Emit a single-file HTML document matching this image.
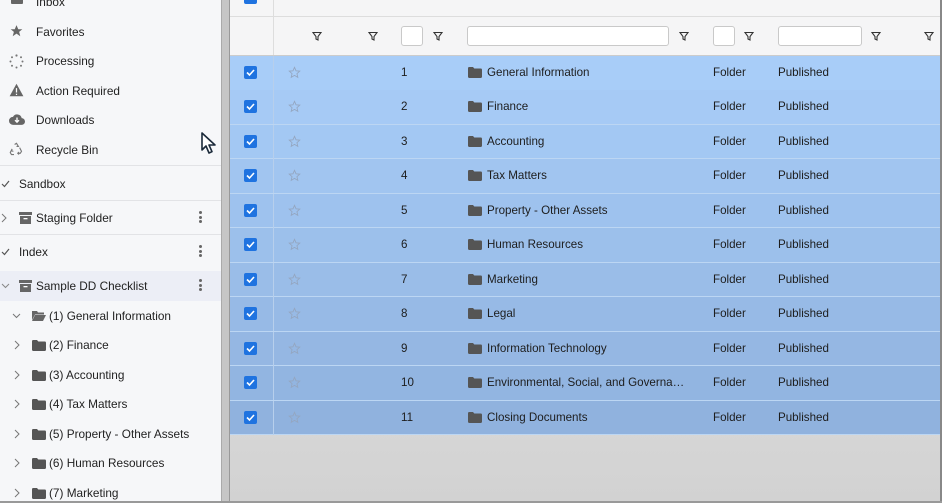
<!DOCTYPE html>
<html><head><style>
*{margin:0;padding:0;box-sizing:border-box}
body{width:942px;height:503px;overflow:hidden;font-family:"Liberation Sans",Arial,sans-serif;font-size:12px;color:#222;background:#fff;position:relative}
.a{position:absolute}
#side{left:0;top:0;width:221px;height:503px;background:#f6f7f9}
#sb{left:221px;top:0;width:9px;height:503px;background:#c6c6c6;border-left:1px solid #aaa;border-right:1px solid #999}
.si{position:absolute;left:36px;font-size:11.8px;color:#222;line-height:14px}
.ic{position:absolute}
.hr{position:absolute;left:0;width:221px;height:1px;background:#e2e3e6}
.dots{position:absolute;left:199px;width:3px}
.dots i{display:block;width:3px;height:3px;border-radius:50%;background:#666;margin-bottom:1.5px}
#main{left:230px;top:0;width:712px;height:503px;background:linear-gradient(#ececec,#d2d2d2)}
#hdr{left:230px;top:0;width:710px;height:56px;background:#f5f5f6}
.row{position:absolute;left:230px;width:710px;height:34.5px;border-bottom:1px solid #bcd6f3}
.cb{position:absolute;left:14px;top:10px;width:13px;height:13px;background:#1f73e0;border-radius:2px}
.cb svg{position:absolute;left:1px;top:1px}
.t{position:absolute;top:10px;font-size:11.6px;color:#1d1d1d;line-height:14px;white-space:nowrap}
.inp{position:absolute;top:26px;height:20px;background:#fff;border:1px solid #c9c9c9;border-radius:3px}
</style></head><body>
<div class="a" id="side">
 <svg class="ic" style="left:10px;top:-6px" width="14" height="12"><rect x="1" y="0" width="12" height="10" rx="1" fill="#666"/><rect x="3" y="2" width="8" height="4" fill="#fff"/></svg>
 <div class="si" style="top:-5px">Inbox</div>
 <svg class="ic" style="left:9px;top:24px" width="15" height="14" viewBox="0 0 24 24"><path d="M12 2l3 7h7l-5.5 4.5 2 7.5L12 16.5 5.5 21l2-7.5L2 9h7z" fill="#666"/></svg>
 <div class="si" style="top:25px">Favorites</div>
 <svg class="ic" style="left:9px;top:54px" width="15" height="15"><g fill="#777"><circle cx="7.5" cy="1.5" r="1.1"/><circle cx="12" cy="3.3" r="1"/><circle cx="13.5" cy="7.5" r="1"/><circle cx="12" cy="11.7" r="1"/><circle cx="7.5" cy="13.5" r="1"/><circle cx="3" cy="11.7" r="1"/><circle cx="1.5" cy="7.5" r="1"/><circle cx="3" cy="3.3" r="1"/></g></svg>
 <div class="si" style="top:54px">Processing</div>
 <svg class="ic" style="left:9px;top:83px" width="15" height="14" viewBox="0 0 24 22"><path d="M12 1L23 21H1z" fill="#666"/><rect x="11" y="8" width="2" height="7" fill="#fff"/><rect x="11" y="17" width="2" height="2" fill="#fff"/></svg>
 <div class="si" style="top:84px">Action Required</div>
 <svg class="ic" style="left:9px;top:113px" width="16" height="13" viewBox="0 0 24 18"><path d="M19 7A7 7 0 0 0 6 5 5.5 5.5 0 0 0 6 17h13a5 5 0 0 0 0-10z" fill="#666"/><path d="M12 6v6m-3-2l3 3 3-3" stroke="#fff" stroke-width="2" fill="none"/></svg>
 <div class="si" style="top:113px">Downloads</div>
 <svg class="ic" style="left:9px;top:142px" width="15" height="15" viewBox="0 0 24 24"><path d="M9 4l3-2 3 5M17 9l3 6-2 3h-4M8 20H4l-2-3 3-6M13 4l2 3-3 0M16 20l-2-2 2-2M5 11l-1 3 3 1" stroke="#777" stroke-width="1.8" fill="none"/></svg>
 <div class="si" style="top:143px">Recycle Bin</div>
 <div class="hr" style="top:165px"></div>
 <svg class="ic" style="left:1px;top:180px" width="9" height="8"><path d="M1 4l2.5 2.5L8 1" stroke="#555" stroke-width="1.2" fill="none"/></svg>
 <div class="si" style="left:19px;top:177px">Sandbox</div>
 <div class="hr" style="top:200px"></div>
 <svg class="ic" style="left:1px;top:213px" width="6" height="10"><path d="M1 1l4 4-4 4" stroke="#777" fill="none"/></svg>
 <svg class="ic" style="left:19px;top:212px" width="13" height="12"><rect x="0" y="0" width="13" height="3" fill="#666"/><rect x="1" y="4" width="11" height="8" fill="#666"/><rect x="4.5" y="6" width="4" height="1.3" fill="#fff"/></svg>
 <div class="si" style="top:211px">Staging Folder</div>
 <div class="dots" style="top:211px"><i></i><i></i><i></i></div>
 <div class="hr" style="top:234px"></div>
 <svg class="ic" style="left:1px;top:248px" width="9" height="8"><path d="M1 4l2.5 2.5L8 1" stroke="#555" stroke-width="1.2" fill="none"/></svg>
 <div class="si" style="left:19px;top:245px">Index</div>
 <div class="dots" style="top:245px"><i></i><i></i><i></i></div>
 <div class="a" style="left:0;top:271px;width:221px;height:30px;background:#eceef6"></div>
 <svg class="ic" style="left:1px;top:283px" width="9" height="6"><path d="M1 1l3.5 3.5L8 1" stroke="#888" fill="none"/></svg>
 <svg class="ic" style="left:19px;top:280px" width="13" height="12"><rect x="0" y="0" width="13" height="3" fill="#666"/><rect x="1" y="4" width="11" height="8" fill="#666"/><rect x="4.5" y="6" width="4" height="1.3" fill="#fff"/></svg>
 <div class="si" style="top:279px">Sample DD Checklist</div>
 <div class="dots" style="top:279px"><i></i><i></i><i></i></div>
 <svg class="ic" style="left:12px;top:313px" width="9" height="6"><path d="M1 1l3.5 3.5L8 1" stroke="#777" fill="none"/></svg>
 <svg class="ic" style="left:32px;top:310px" width="14" height="11"><path d="M0 1h5l1 1.5h6v2H3L0 10z" fill="#666"/><path d="M3 5h11l-3 6H0z" fill="#666"/></svg>
 <div class="si" style="left:49px;top:309px">(1) General Information</div>
 <div id="tree"></div>
</div>
<div class="a" id="sb"></div>
<div class="a" id="main"></div>
<div class="a" id="hdr">
 <div class="a" style="left:0;top:16px;width:710px;height:1px;background:#ddd"></div>
 <div class="a" style="left:43px;top:0;width:1px;height:56px;background:#ddd"></div>
 <div class="a" style="left:0;top:55px;width:710px;height:1px;background:#ccc"></div>
 <div class="a" style="left:14px;top:-8px;width:13px;height:12px;background:#1f73e0;border-radius:2px"></div>
 <div class="inp" style="left:171px;width:22px"></div>
 <div class="inp" style="left:237px;width:202px"></div>
 <div class="inp" style="left:483px;width:22px"></div>
 <div class="inp" style="left:548px;width:84px"></div>
</div>
<div class="a" style="left:940px;top:0;width:2px;height:503px;background:#888"></div>
<div class="a" style="left:0;top:501px;width:942px;height:2px;background:#999"></div>
<div id="rows"></div>
<script>
var names=["General Information","Finance","Accounting","Tax Matters","Property - Other Assets","Human Resources","Marketing","Legal","Information Technology","Environmental, Social, and Governa…","Closing Documents"];
var folder='<svg width="14" height="11" viewBox="0 0 14 11"><path d="M0 1.2Q0 0 1.2 0H5l1.3 1.5h6.5Q14 1.5 14 2.7V9.8Q14 11 12.8 11H1.2Q0 11 0 9.8z" fill="#555"/></svg>';
var h='';
for(var i=0;i<11;i++){
 var ry=56+i*34.45;
 var c1=[168,205,248],c2=[144,178,222];var f=i/10;
 var col='rgb('+Math.round(c1[0]+(c2[0]-c1[0])*f)+','+Math.round(c1[1]+(c2[1]-c1[1])*f)+','+Math.round(c1[2]+(c2[2]-c1[2])*f)+')';
 h+='<div class="row" style="top:'+ry+'px;background:'+col+'">'+
 '<div class="a" style="left:43px;top:0;width:1px;height:34px;background:#b7cfec"></div>'+
 '<div class="cb"><svg width="11" height="11"><path d="M2 5.5l2.5 2.5L9 3" stroke="#fff" stroke-width="1.6" fill="none"/></svg></div>'+
 '<svg class="a" style="left:58px;top:10px" width="13" height="13" viewBox="0 0 24 24"><path d="M12 2.5l2.8 6.4 6.9.6-5.2 4.6 1.6 6.8L12 17.3l-6.1 3.6 1.6-6.8L2.3 9.5l6.9-.6z" fill="none" stroke="#94a6c0" stroke-width="1.6"/></svg>'+
 '<div class="t" style="left:171px">'+(i+1)+'</div>'+
 '<div class="a" style="left:238px;top:11px">'+folder+'</div>'+
 '<div class="t" style="left:257px">'+names[i]+'</div>'+
 '<div class="t" style="left:483px">Folder</div>'+
 '<div class="t" style="left:548px">Published</div></div>';
}
var fx=[312,368,433,679,744,871,924],fl='';
fx.forEach(function(x){fl+='<svg class="a" style="left:'+x+'px;top:31px" width="10" height="10"><path d="M1 1.5h8L6 5.5V9L4 8V5.5z" fill="none" stroke="#333" stroke-width="1.1"/></svg>';});
document.getElementById('rows').innerHTML=h+fl;
var tn=["(2) Finance","(3) Accounting","(4) Tax Matters","(5) Property - Other Assets","(6) Human Resources","(7) Marketing"],t='';
for(var j=0;j<6;j++){var yy=345+j*29.6;
t+='<svg class="ic" style="left:14px;top:'+(yy-5)+'px" width="6" height="10"><path d="M1 1l4 4-4 4" stroke="#777" fill="none"/></svg>'+
'<div class="ic" style="left:32px;top:'+(yy-5)+'px">'+folder+'</div>'+
'<div class="si" style="left:49px;top:'+(yy-7)+'px">'+tn[j]+'</div>';}
document.getElementById('tree').innerHTML=t;
</script>
<svg class="a" style="left:200px;top:131px" width="18" height="24" viewBox="0 0 18 24"><path d="M2 2v17l4-4 3 7 3-1.3-3-6.7h6z" fill="#fff" stroke="#1b2a3a" stroke-width="1.6" stroke-linejoin="round"/></svg>
</body></html>
